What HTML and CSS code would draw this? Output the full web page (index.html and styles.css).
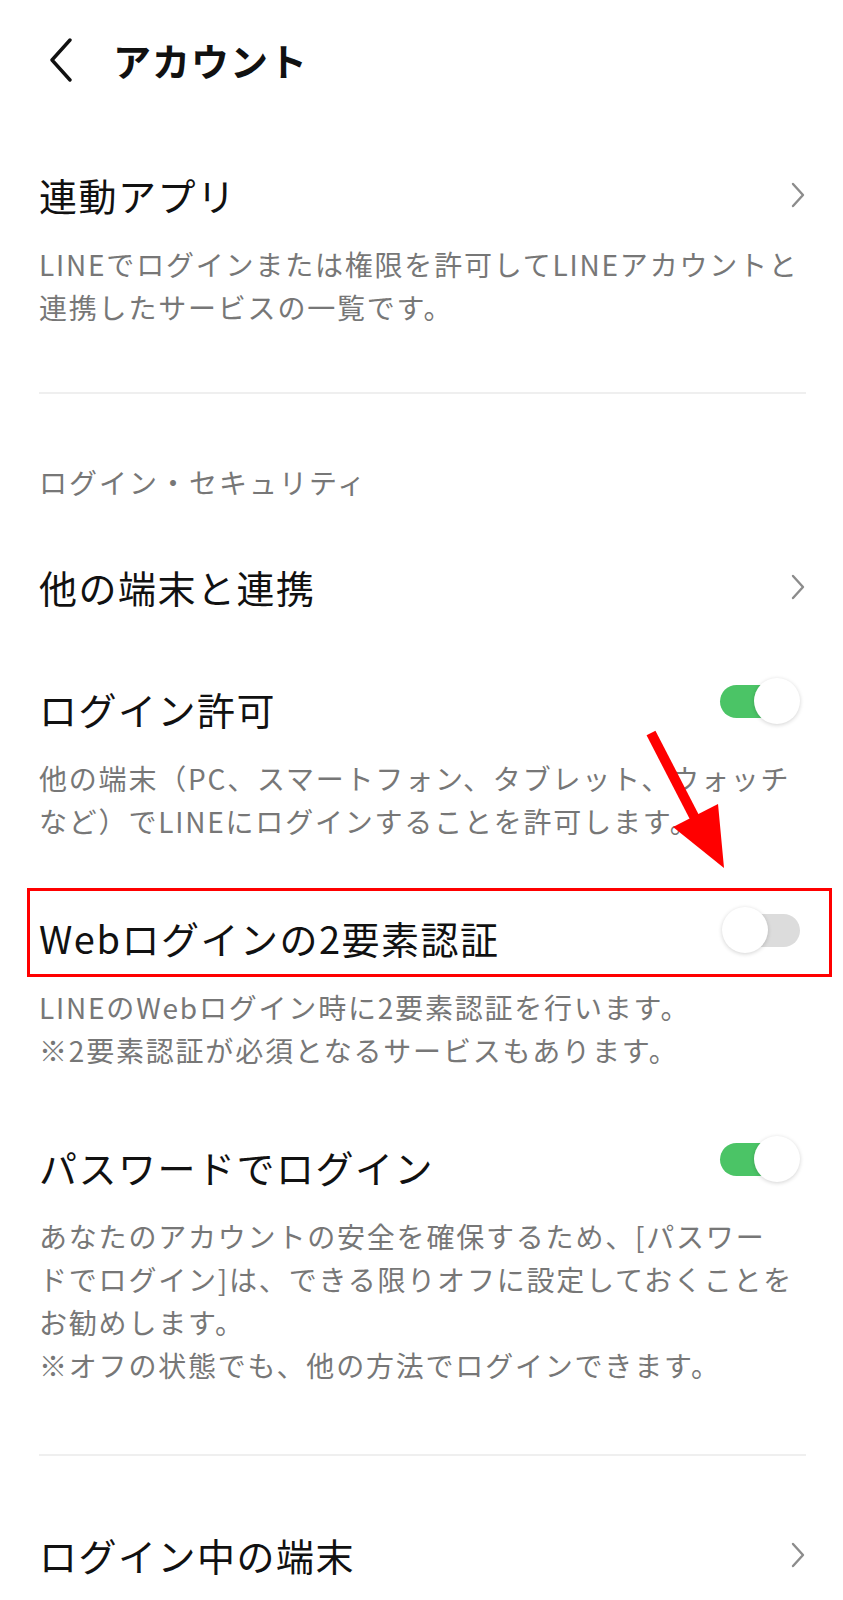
FILE: index.html
```html
<!DOCTYPE html>
<html lang="ja">
<head>
    <meta charset="UTF-8">
    <meta name="viewport" content="width=device-width, initial-scale=1.0">
    <title>アカウント</title>
    <link rel="stylesheet" href="styles.css">
</head>
<body>
    <div class="page">
        <header class="topbar">
            <svg class="back" width="24" height="44" viewBox="0 0 24 44">
                <path d="M21 2 L3 22 L21 42" />
            </svg>
            <h1>アカウント</h1>
        </header>

        <section class="group first">
            <div class="item">
                <div class="item-row">
                    <span class="item-title">連動アプリ</span>
                    <svg class="chevron" width="16" height="26" viewBox="0 0 16 26"><path d="M3 2 L13 13 L3 24" /></svg>
                </div>
                <p class="item-desc">LINEでログインまたは権限を許可してLINEアカウントと<br>連携したサービスの一覧です。</p>
            </div>
        </section>

        <section class="group">
            <h2 class="group-title">ログイン・セキュリティ</h2>

            <div class="item">
                <div class="item-row">
                    <span class="item-title">他の端末と連携</span>
                    <svg class="chevron" width="16" height="26" viewBox="0 0 16 26"><path d="M3 2 L13 13 L3 24" /></svg>
                </div>
            </div>

            <div class="item">
                <div class="item-row">
                    <span class="item-title">ログイン許可</span>
                    <span class="switch on"><span class="track"></span><span class="knob"></span></span>
                </div>
                <p class="item-desc">他の端末（PC、スマートフォン、タブレット、ウォッチ<br>など）でLINEにログインすることを許可します。</p>
            </div>

            <div class="item">
                <div class="item-row highlight">
                    <span class="item-title">Webログインの2要素認証</span>
                    <span class="switch off"><span class="knob"></span><span class="track"></span></span>
                </div>
                <p class="item-desc">LINEのWebログイン時に2要素認証を行います。<br>※2要素認証が必須となるサービスもあります。</p>
            </div>

            <div class="item">
                <div class="item-row">
                    <span class="item-title">パスワードでログイン</span>
                    <span class="switch on"><span class="track"></span><span class="knob"></span></span>
                </div>
                <p class="item-desc">あなたのアカウントの安全を確保するため、[パスワー<br>ドでログイン]は、できる限りオフに設定しておくことを<br>お勧めします。<br>※オフの状態でも、他の方法でログインできます。</p>
            </div>
        </section>

        <section class="group last">
            <div class="item">
                <div class="item-row">
                    <span class="item-title">ログイン中の端末</span>
                    <svg class="chevron" width="16" height="26" viewBox="0 0 16 26"><path d="M3 2 L13 13 L3 24" /></svg>
                </div>
            </div>
        </section>

        <!-- annotation arrow pointing at the highlighted row -->
        <svg class="arrow" width="110" height="160" viewBox="0 0 110 160">
            <line x1="21" y1="13" x2="70" y2="108" />
            <polygon points="43,107 88,84 94,148" />
        </svg>
    </div>
</body>
</html>
```

FILE: styles.css
```css
* {
    margin: 0;
    padding: 0;
    box-sizing: border-box;
}

html, body {
    background: #fff;
    font-family: "Noto Sans CJK JP", "Noto Sans", sans-serif;
    color: #111;
}

.page {
    position: relative;
    width: 843px;
    min-height: 1600px;
    padding: 0 37px 0 39px;
    overflow: hidden;
}

.topbar {
    display: flex;
    align-items: center;
    gap: 40px;
    height: 120px;
    padding-left: 10px;
}

.topbar h1 {
    font-size: 38px;
    font-weight: 700;
    letter-spacing: 1px;
    line-height: 1;
}

.back path {
    fill: none;
    stroke: #111;
    stroke-width: 3.4;
    stroke-linecap: round;
    stroke-linejoin: round;
}

.group {
    border-bottom: 2px solid #efefef;
    padding: 67px 0 33px;
}

.group.first {
    padding: 14px 0 29px;
}

.group.last {
    border-bottom: none;
    padding-top: 38px;
}

.group-title {
    font-size: 28px;
    font-weight: 400;
    line-height: 43px;
    letter-spacing: 2px;
    color: #777;
    margin-bottom: 22px;
}

.item {
    padding: 26px 0;
}

.item-row {
    display: flex;
    align-items: center;
    justify-content: space-between;
    height: 70px;
}

.item-title {
    font-size: 38px;
    line-height: 70px;
    letter-spacing: 1.5px;
    color: #111;
}

.item-desc {
    font-size: 28px;
    line-height: 43px;
    letter-spacing: 1.8px;
    color: #777;
    white-space: nowrap;
    margin: 13px 0 8px;
}

.chevron path {
    fill: none;
    stroke: #8c8c8c;
    stroke-width: 2.4;
    stroke-linecap: round;
    stroke-linejoin: round;
}

/* switch */
.switch {
    display: flex;
    align-items: center;
    width: 80px;
    height: 46px;
    margin: 0 6px 16px 0;
}

.track {
    width: 66px;
    height: 33px;
    border-radius: 17px;
    background: #4bc466;
}

.knob {
    position: relative;
    z-index: 1;
    width: 46px;
    height: 46px;
    border-radius: 50%;
    background: #fff;
    box-shadow: 0 1px 4px rgba(0, 0, 0, 0.18);
}

.switch.on .knob {
    margin-left: -32px;
}

.switch.off .knob {
    margin-left: 2px;
}

.switch.off .track {
    margin-left: -34px;
    background: #dcdcdc;
}

/* red annotation */
.highlight {
    position: relative;
}

.highlight::after {
    content: "";
    position: absolute;
    top: -15px;
    bottom: -4px;
    left: -12px;
    right: -26px;
    border: 3px solid #f00;
    pointer-events: none;
}

.arrow {
    position: absolute;
    left: 630px;
    top: 720px;
}

.arrow line {
    stroke: #f00;
    stroke-width: 10;
}

.arrow polygon {
    fill: #f00;
}
```
